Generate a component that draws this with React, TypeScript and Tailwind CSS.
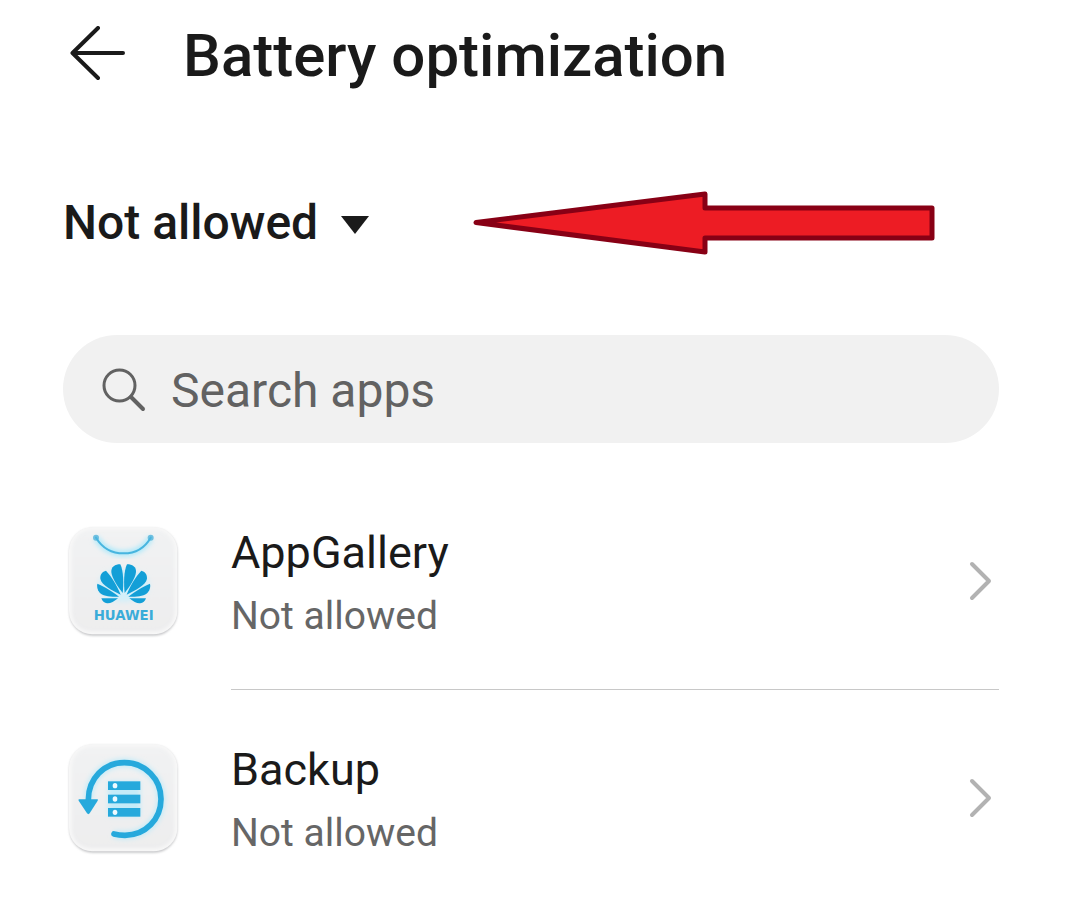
function TileBase({ id }: { id: string }) {
  return (
    <>
      <defs>
        <linearGradient id={`${id}-face`} x1="0" y1="0" x2="0" y2="1">
          <stop offset="0" stopColor="#f1f2f3" />
          <stop offset="1" stopColor="#ededee" />
        </linearGradient>
        <filter id={`${id}-shadow`} x="-10%" y="-10%" width="120%" height="120%">
          <feGaussianBlur stdDeviation="3" />
        </filter>
        <filter id={`${id}-soft`} x="-10%" y="-10%" width="120%" height="120%">
          <feGaussianBlur stdDeviation="5" />
        </filter>
        <filter id={`${id}-glow`} x="-30%" y="-30%" width="160%" height="160%">
          <feGaussianBlur stdDeviation="8" />
        </filter>
      </defs>
      <rect x="58" y="55" width="324" height="322" rx="70" fill="#c4c5c7" filter={`url(#${id}-shadow)`} />
      <rect x="57" y="52" width="325" height="321" rx="70" fill="#f7f7f7" />
      <rect x="66" y="60" width="307" height="304" rx="58" fill={`url(#${id}-face)`} filter={`url(#${id}-soft)`} />
    </>
  );
}

function HalfFlower() {
  return (
    <>
      <path d="M218 249C202 228 186 205 184 186C183 171 195 163 211 163C221 184 221 222 218 249Z" />
      <path d="M212 254C186 240 155 226 151 206C150 192 157 185 168 182C185 200 202 228 212 254Z" />
      <path d="M207 260C185 261 158 260 148 247C142 239 140 229 142 221C165 231 190 246 207 260Z" />
      <path d="M204 265C192 275 181 281 171 280C163 279 157 274 154 265Z" />
    </>
  );
}

function AppGalleryIcon() {
  return (
    <svg viewBox="54 48 330 330" className="size-[110px] shrink-0 overflow-visible" aria-hidden="true">
      <TileBase id="gallery" />
      <path d="M138 83C158 116 190 130 221 130S283 116 302 83" fill="none" stroke="#a5e8fb" strokeWidth="16" filter="url(#gallery-glow)" />
      <circle cx="138" cy="83" r="9" fill="#6ebfe0" />
      <circle cx="302" cy="83" r="9" fill="#6ebfe0" />
      <path d="M138 83C158 116 190 130 221 130S283 116 302 83" fill="none" stroke="#48b5df" strokeWidth="6" strokeLinecap="round" />
      <ellipse cx="221" cy="226" rx="78" ry="50" fill="#d3eff9" filter="url(#gallery-glow)" />
      <g fill="#139fd7">
        <HalfFlower />
        <g transform="translate(442 0) scale(-1 1)">
          <HalfFlower />
        </g>
      </g>
      <text x="221" y="330" textAnchor="middle" fontSize="40" fontWeight="700" fill="#3aacd9" fontFamily="DejaVu Sans, sans-serif">
        HUAWEI
      </text>
    </svg>
  );
}

function BackupIcon() {
  return (
    <svg viewBox="54 38 330 330" className="size-[110px] shrink-0 overflow-visible" aria-hidden="true">
      <g transform="translate(0 -10)">
        <TileBase id="backup" />
      </g>
      <path d="M115 208C115 145 162 97 223 97C286 97 333 147 333 206C333 267 286 315 225 315Q207 315 192 311" fill="none" stroke="#bfeaf8" strokeWidth="24" filter="url(#backup-glow)" />
      <rect x="175" y="153" width="96" height="105" fill="#c3ebf8" filter="url(#backup-glow)" />
      <path d="M115 208C115 145 162 97 223 97C286 97 333 147 333 206C333 267 286 315 225 315Q207 315 192 311" fill="none" stroke="#26a9dc" strokeWidth="17" strokeLinecap="round" />
      <path d="M88 207H142Q145 207 143 211L119 249Q115 254 111 249L86 211Q84 207 88 207Z" fill="#26a9dc" />
      {[153, 193, 233].map((y) => (
        <g key={y}>
          <rect x="174" y={y} width="97" height="26" fill="#26a9dc" />
          <ellipse cx="195" cy={y + 13} rx="7" ry="8" fill="#eefaff" />
        </g>
      ))}
    </svg>
  );
}

const apps = [
  { name: "AppGallery", status: "Not allowed", Icon: AppGalleryIcon },
  { name: "Backup", status: "Not allowed", Icon: BackupIcon },
];

export default function App() {
  return (
    <main className="min-h-screen bg-white pt-4 pr-[77px] pl-[63px] font-['Roboto',sans-serif] text-[#1a1a1a]">
      <header className="flex h-20 items-center gap-[50px]">
        <button type="button" aria-label="Back" className="shrink-0">
          <svg viewBox="0 0 70 60" className="h-[60px] w-[70px]" fill="none" stroke="currentColor" strokeWidth="4" strokeLinecap="round" strokeLinejoin="round" aria-hidden="true">
            <path d="M35 2L9.500 27L35 52M10 27H60" />
          </svg>
        </button>
        <h1 className="text-[60px] leading-[80px] font-medium whitespace-nowrap">Battery optimization</h1>
      </header>

      <div className="mt-[95px] flex h-16 items-center">
        <div className="relative flex items-center">
          <select aria-label="Filter apps" className="appearance-none bg-transparent pr-[50px] text-[48px] leading-[64px] font-medium outline-none" defaultValue="not">
            <option value="not">Not allowed</option>
            <option value="all">All apps</option>
          </select>
          <svg viewBox="0 0 28 22" className="pointer-events-none absolute right-0 h-[22px] w-7" fill="currentColor" aria-hidden="true">
            <path d="M0 4H28L14 22Z" />
          </svg>
        </div>
        <svg viewBox="0 0 462 64" className="ml-[104px] h-16 w-[462px] shrink-0" aria-hidden="true">
          <path d="M3 31.500L232 3V17H459V47H232V61Z" fill="#ed1c24" stroke="#880015" strokeWidth="5" strokeLinejoin="round" />
        </svg>
      </div>

      <label className="mt-20 flex h-[108px] items-center gap-6 rounded-full bg-[#f1f1f1] px-9 text-[#626262]">
        <svg viewBox="0 0 48 48" className="size-12 shrink-0" fill="none" stroke="currentColor" strokeWidth="3" strokeLinecap="round" aria-hidden="true">
          <circle cx="20.500" cy="20.500" r="15.500" />
          <path d="M32 32L44 44" strokeWidth="4" />
        </svg>
        <input type="search" aria-label="Search apps" placeholder="Search apps" className="min-w-0 flex-1 bg-transparent pt-1 text-[48px] leading-[64px] outline-none placeholder:text-[#626262] placeholder:opacity-100" />
      </label>

      <ul className="mt-[30px]">
        {apps.map(({ name, status, Icon }, i) => (
          <li key={name}>
            {i > 0 && <div className="ml-[168px] h-px bg-[#c8c8c8]" />}
            <button type="button" className="flex h-[216px] w-full items-center gap-[53px] pl-[5px] text-left">
              <Icon />
              <span className="flex-1 pt-2">
                <span className="block text-[45px] leading-[62px]">{name}</span>
                <span className="block text-[39px] leading-[64px] text-[#666]">{status}</span>
              </span>
              <svg viewBox="0 0 30 44" className="mr-1 h-11 w-[30px]" fill="none" stroke="#b2b2b2" strokeWidth="4" strokeLinecap="round" strokeLinejoin="round" aria-hidden="true">
                <path d="M7 5L24 22L7 39" />
              </svg>
            </button>
          </li>
        ))}
      </ul>
    </main>
  );
}
